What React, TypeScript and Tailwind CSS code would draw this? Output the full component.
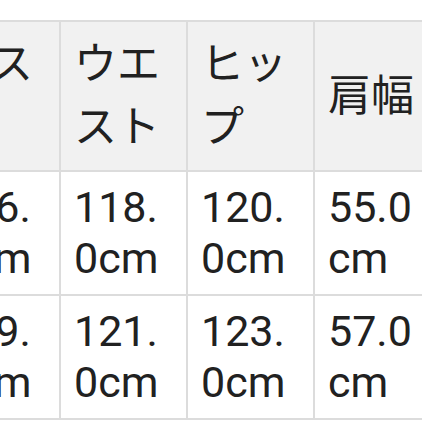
const columns = ["バスト", "ウエスト", "ヒップ", "肩幅", "袖丈"];

const rows = [
  ["116.0cm", "118.0cm", "120.0cm", "55.0cm", "60.0cm"],
  ["119.0cm", "121.0cm", "123.0cm", "57.0cm", "61.0cm"],
];

const cell =
  "border-2 border-[#dcdcdc] px-[13px] align-middle text-left font-normal break-all";

export default function App() {
  return (
    <div className="h-[422px] w-[422px] overflow-hidden bg-white pt-5 text-[43px] text-[#212121] [font-family:Roboto,'Noto_Sans_CJK_JP',sans-serif]">
      <table className="ml-[-68px] w-[635px] min-w-[635px] table-fixed border-collapse">
        <colgroup>
          {columns.map((name) => (
            <col key={name} className="w-[127px]" />
          ))}
        </colgroup>
        <thead>
          <tr className="bg-[#f1f1f1]">
            {columns.map((name) => (
              <th key={name} className={`${cell} py-[11px] leading-[63px]`}>
                {name}
              </th>
            ))}
          </tr>
        </thead>
        <tbody>
          {rows.map((row, i) => (
            <tr key={i}>
              {row.map((value, j) => (
                <td key={j} className={`${cell} py-[10px] leading-[51px]`}>
                  {value}
                </td>
              ))}
            </tr>
          ))}
        </tbody>
      </table>
    </div>
  );
}
